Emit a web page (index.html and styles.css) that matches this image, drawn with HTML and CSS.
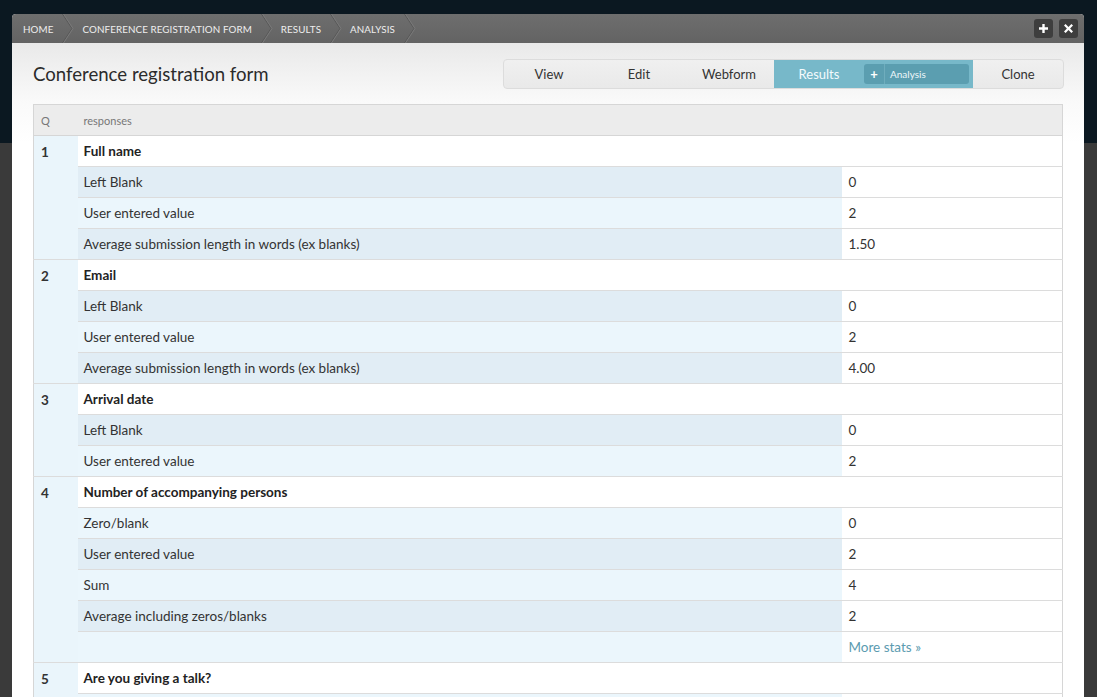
FILE: index.html
```html
<!DOCTYPE html>
<html lang="en">
<head>
<meta charset="utf-8">
<title>Conference registration form – Results</title>
<link rel="stylesheet" href="styles.css">
</head>
<body>
<div class="window">
  <div class="titlebar">
    <nav class="crumbs">
      <a class="crumb" href="#">HOME</a>
      <span class="sep"><svg width="12" height="29" viewBox="0 0 12 29"><polyline points="0.5,0 10,14.5 0.5,29" fill="none" stroke="#575757" stroke-width="1"/><polyline points="1.5,0 11,14.5 1.5,29" fill="none" stroke="#7a7a7a" stroke-width="1"/></svg></span>
      <a class="crumb" href="#">CONFERENCE REGISTRATION FORM</a>
      <span class="sep"><svg width="12" height="29" viewBox="0 0 12 29"><polyline points="0.5,0 10,14.5 0.5,29" fill="none" stroke="#575757" stroke-width="1"/><polyline points="1.5,0 11,14.5 1.5,29" fill="none" stroke="#7a7a7a" stroke-width="1"/></svg></span>
      <a class="crumb" href="#">RESULTS</a>
      <span class="sep"><svg width="12" height="29" viewBox="0 0 12 29"><polyline points="0.5,0 10,14.5 0.5,29" fill="none" stroke="#575757" stroke-width="1"/><polyline points="1.5,0 11,14.5 1.5,29" fill="none" stroke="#7a7a7a" stroke-width="1"/></svg></span>
      <a class="crumb" href="#">ANALYSIS</a>
      <span class="sep"><svg width="12" height="29" viewBox="0 0 12 29"><polyline points="0.5,0 10,14.5 0.5,29" fill="none" stroke="#575757" stroke-width="1"/><polyline points="1.5,0 11,14.5 1.5,29" fill="none" stroke="#7a7a7a" stroke-width="1"/></svg></span>
    </nav>
    <div class="win-buttons">
      <button class="win-btn" title="Maximise"><svg width="9" height="9" viewBox="0 0 9 9"><path d="M3.3 0h2.4v3.3H9v2.4H5.7V9H3.3V5.7H0V3.3h3.3z" fill="#fff"/></svg></button>
      <button class="win-btn" title="Close"><svg width="9" height="9" viewBox="0 0 9 9"><path d="M1.6 0L4.5 2.9 7.4 0 9 1.6 6.1 4.5 9 7.4 7.4 9 4.5 6.1 1.6 9 0 7.4 2.9 4.5 0 1.6z" fill="#fff"/></svg></button>
    </div>
  </div>

  <div class="content">
    <header class="page-head">
      <h1 class="page-title">Conference registration form</h1>
      <ul class="tabs">
        <li class="tab"><a href="#">View</a></li>
        <li class="tab"><a href="#">Edit</a></li>
        <li class="tab"><a href="#">Webform</a></li>
        <li class="tab tab-active">
          <a href="#">Results</a>
          <span class="subtab"><span class="subtab-plus">+</span><span class="subtab-label">Analysis</span></span>
        </li>
        <li class="tab"><a href="#">Clone</a></li>
      </ul>
    </header>

    <table class="results">
      <colgroup><col class="col-q"><col class="col-label"><col class="col-value"></colgroup>
      <thead>
        <tr><th class="q">Q</th><th colspan="2">responses</th></tr>
      </thead>
      <tbody>
        <tr class="question"><td class="q" rowspan="4">1</td><td colspan="2">Full name</td></tr>
        <tr class="dark"><td class="label">Left Blank</td><td class="value">0</td></tr>
        <tr class="light"><td class="label">User entered value</td><td class="value">2</td></tr>
        <tr class="dark"><td class="label">Average submission length in words (ex blanks)</td><td class="value">1.50</td></tr>

        <tr class="question"><td class="q" rowspan="4">2</td><td colspan="2">Email</td></tr>
        <tr class="dark"><td class="label">Left Blank</td><td class="value">0</td></tr>
        <tr class="light"><td class="label">User entered value</td><td class="value">2</td></tr>
        <tr class="dark"><td class="label">Average submission length in words (ex blanks)</td><td class="value">4.00</td></tr>

        <tr class="question"><td class="q" rowspan="3">3</td><td colspan="2">Arrival date</td></tr>
        <tr class="dark"><td class="label">Left Blank</td><td class="value">0</td></tr>
        <tr class="light"><td class="label">User entered value</td><td class="value">2</td></tr>

        <tr class="question"><td class="q" rowspan="6">4</td><td colspan="2">Number of accompanying persons</td></tr>
        <tr class="light"><td class="label">Zero/blank</td><td class="value">0</td></tr>
        <tr class="dark"><td class="label">User entered value</td><td class="value">2</td></tr>
        <tr class="light"><td class="label">Sum</td><td class="value">4</td></tr>
        <tr class="dark"><td class="label">Average including zeros/blanks</td><td class="value">2</td></tr>
        <tr class="light"><td class="label"></td><td class="value"><a class="more" href="#">More stats »</a></td></tr>

        <tr class="question"><td class="q" rowspan="3">5</td><td colspan="2">Are you giving a talk?</td></tr>
        <tr class="light"><td class="label">Yes</td><td class="value">1</td></tr>
        <tr class="dark"><td class="label">No</td><td class="value">1</td></tr>
      </tbody>
    </table>
  </div>
</div>
</body>
</html>
```

FILE: styles.css
```css
html, body {
  margin: 0;
  padding: 0;
}

body {
  background: linear-gradient(#0b1821 0, #0b1821 143px, #3a3a3a 143px, #3a3a3a 100%);
  background-color: #3a3a3a;
  font-family: Lato, "Liberation Sans", sans-serif;
  color: #333;
  min-height: 697px;
  padding: 14px 13px 0 12px;
  box-sizing: border-box;
}

/* ---------- window ---------- */
.window {
  background: #fff;
  border-radius: 4px 4px 0 0;
  overflow: hidden;
}

.titlebar {
  height: 29px;
  background: linear-gradient(#6e6e6e, #636363);
  display: flex;
  align-items: center;
  justify-content: space-between;
}

.crumbs {
  display: flex;
  align-items: center;
  height: 29px;
  padding-left: 11px;
}

.crumb {
  color: #eeeeee;
  text-decoration: none;
  font-size: 9.8px;
  letter-spacing: 0.1px;
  padding-right: 9px;
}

.sep {
  display: flex;
  height: 29px;
  margin-right: 8px;
}

.win-buttons {
  display: flex;
  gap: 6px;
  padding-right: 6px;
}

.win-btn {
  width: 19px;
  height: 19px;
  border: 0;
  padding: 0;
  border-radius: 3px;
  background: #3e3e3e;
  display: flex;
  align-items: center;
  justify-content: center;
}

/* ---------- content ---------- */
.content {
  background: linear-gradient(#e9e9e9 0, #fafafa 60px, #ffffff 100px);
  padding: 16px 21px 0 21px;
}

.page-head {
  display: flex;
  align-items: center;
  justify-content: space-between;
  height: 30px;
  margin-bottom: 15px;
}

.page-title {
  margin: 0;
  font-size: 18.6px;
  font-weight: normal;
  color: #2b2b2b;
}

.tabs {
  list-style: none;
  margin: 0 -1px 0 0;
  padding: 0;
  display: flex;
  height: 30px;
  box-sizing: border-box;
  border: 1px solid #dcdcdc;
  border-radius: 4px;
  background: linear-gradient(#f0f0f0, #e9e9e9);
  overflow: hidden;
}

.tab {
  width: 90px;
  display: flex;
  align-items: center;
  justify-content: center;
  font-size: 13px;
}

.tab a {
  color: #333;
  text-decoration: none;
}

.tab-active {
  width: 199px;
  background: #77b8c9;
  justify-content: flex-start;
}

.tab-active a {
  width: 90px;
  text-align: center;
  color: #f4fbfd;
}

.subtab {
  width: 105px;
  height: 20px;
  border-radius: 3px;
  background: #5b9eb0;
  display: flex;
  align-items: center;
  color: #fff;
}

.subtab-plus {
  width: 20px;
  text-align: center;
  font-weight: bold;
  font-size: 13px;
  border-right: 1px solid #6fadbd;
  line-height: 20px;
}

.subtab-label {
  padding-left: 5px;
  font-size: 10px;
  color: #eef7fa;
}

/* ---------- results table ---------- */
.results {
  width: 100%;
  border-collapse: collapse;
  border: 1px solid #d6d6d6;
  font-size: 13.5px;
  table-layout: fixed;
}

.col-q { width: 44px; }
.col-value { width: 220px; }

.results th,
.results td {
  height: 31px;
  padding: 0 6px;
  text-align: left;
  border-bottom: 1px solid #dcdcdc;
  box-sizing: border-box;
}

.results thead th {
  background: #ececec;
  font-weight: normal;
  font-size: 11px;
  color: #777;
  border-bottom: 1px solid #d6d6d6;
}

.results th.q,
.results td.q {
  padding-left: 7px;
}

.results td.q {
  vertical-align: top;
  padding-top: 8px;
  background: #eaf5fb;
  font-weight: bold;
  color: #333;
}

.question td {
  background: #fff;
  font-weight: bold;
  color: #222;
}

.dark .label { background: #e1edf5; }
.light .label { background: #ebf6fc; }

.label { color: #333; }

.value {
  background: #fff;
  color: #333;
}

.more {
  color: #5b9bb0;
  text-decoration: none;
}
```
